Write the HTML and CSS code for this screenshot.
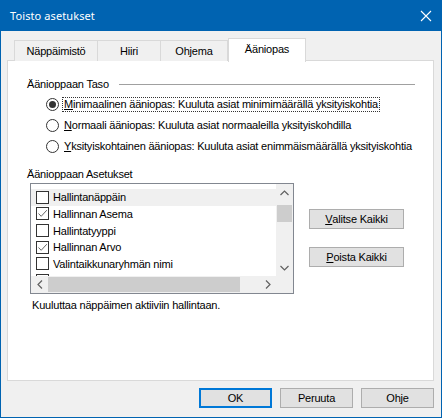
FILE: index.html
```html
<!DOCTYPE html>
<html lang="fi">
<head>
<meta charset="utf-8">
<title>Toisto asetukset</title>
<link rel="stylesheet" href="styles.css">
</head>
<body>
<div class="window">
  <div class="titlebar">
    <span class="title">Toisto asetukset</span>
    <svg class="close" width="12" height="12" viewBox="0 0 12 12"><path d="M1 1L11 11M11 1L1 11" stroke="#ffffff" stroke-width="1.1" fill="none"/></svg>
  </div>
  <div class="client">
    <div class="tabs">
      <div class="tab t1">Näppäimistö</div>
      <div class="tab t2">Hiiri</div>
      <div class="tab t3">Ohjema</div>
      <div class="tab t4 sel">Ääniopas</div>
    </div>
    <div class="panel">
      <div class="group-head"><span class="legend">Äänioppaan Taso</span><div class="rule"></div></div>
      <div class="radios">
        <div class="radio-row"><span class="radio on"></span><span class="rtext focus"><u>M</u>inimaalinen ääniopas: Kuuluta asiat minimimäärällä yksityiskohtia</span></div>
        <div class="radio-row"><span class="radio"></span><span class="rtext"><u>N</u>ormaali ääniopas: Kuuluta asiat normaaleilla yksityiskohdilla</span></div>
        <div class="radio-row"><span class="radio"></span><span class="rtext"><u>Y</u>ksityiskohtainen ääniopas: Kuuluta asiat enimmäismäärällä yksityiskohtia</span></div>
      </div>
      <div class="label2">Äänioppaan Asetukset</div>
      <div class="list-row">
        <div class="listbox">
          <div class="items">
            <div class="item hover"><span class="cb"></span><span>Hallintanäppäin</span></div>
            <div class="item"><span class="cb checked"><svg width="11" height="11" viewBox="0 0 11 11"><path d="M1.5 5.5L4.2 8.3L9.8 2.2" stroke="#666" stroke-width="1" fill="none"/></svg></span><span>Hallinnan Asema</span></div>
            <div class="item"><span class="cb"></span><span>Hallintatyyppi</span></div>
            <div class="item"><span class="cb checked"><svg width="11" height="11" viewBox="0 0 11 11"><path d="M1.5 5.5L4.2 8.3L9.8 2.2" stroke="#666" stroke-width="1" fill="none"/></svg></span><span>Hallinnan Arvo</span></div>
            <div class="item"><span class="cb"></span><span>Valintaikkunaryhmän nimi</span></div>
            <div class="item"><span class="cb"></span></div>
          </div>
          <div class="vscroll">
            <div class="arrow"><svg width="9" height="6" viewBox="0 0 9 6"><path d="M0.5 5L4.5 1L8.5 5" stroke="#606060" stroke-width="1.2" fill="none"/></svg></div>
            <div class="vtrack"><div class="vthumb"></div></div>
            <div class="arrow"><svg width="9" height="6" viewBox="0 0 9 6"><path d="M0.5 1L4.5 5L8.5 1" stroke="#606060" stroke-width="1.2" fill="none"/></svg></div>
          </div>
          <div class="hscroll">
            <div class="arrow"><svg width="6" height="9" viewBox="0 0 6 9"><path d="M5 0.5L1 4.5L5 8.5" stroke="#606060" stroke-width="1.2" fill="none"/></svg></div>
            <div class="htrack"><div class="hthumb"></div></div>
            <div class="arrow"><svg width="6" height="9" viewBox="0 0 6 9"><path d="M1 0.5L5 4.5L1 8.5" stroke="#606060" stroke-width="1.2" fill="none"/></svg></div>
          </div>
          <div class="corner"></div>
        </div>
        <div class="side-buttons">
          <div class="btn"><u>V</u>alitse Kaikki</div>
          <div class="btn"><u>P</u>oista Kaikki</div>
        </div>
      </div>
      <div class="desc">Kuuluttaa näppäimen aktiiviin hallintaan.</div>
    </div>
    <div class="footer">
      <div class="btn fbtn default">OK</div>
      <div class="btn fbtn">Peruuta</div>
      <div class="btn fbtn">Ohje</div>
    </div>
  </div>
</div>
</body>
</html>
```

FILE: styles.css
```css
* { box-sizing: border-box; }
html, body { margin: 0; padding: 0; }
body {
  width: 442px;
  height: 418px;
  background: #f0f0f0;
  font-family: "Liberation Sans", Arial, sans-serif;
  font-size: 11px;
  letter-spacing: -0.2px;
  color: #000;
}
.window {
  width: 442px;
  height: 418px;
  border: 1px solid #0063b1;
  border-top: none;
  background: #f0f0f0;
  display: flex;
  flex-direction: column;
}
.titlebar {
  height: 31px;
  margin: 0 -1px;
  background: #0063b1;
  display: flex;
  align-items: center;
  justify-content: space-between;
  padding: 0 10px 0 10px;
  flex: none;
}
.title {
  font-family: "Noto Sans", "Open Sans", sans-serif;
  font-size: 11px;
  letter-spacing: 0.1px;
  color: #fff;
}
.client {
  flex: 1;
  padding: 7px 7px 0 6px;
  display: flex;
  flex-direction: column;
}
.tabs {
  height: 23px;
  display: flex;
  align-items: flex-end;
  padding-left: 7px;
  position: relative;
  z-index: 2;
  margin-bottom: -1px;
}
.tab {
  height: 21px;
  border: 1px solid #d9d9d9;
  border-bottom: none;
  background: #f0f0f0;
  display: flex;
  align-items: center;
  justify-content: center;
  padding-bottom: 1px;
}
.tab + .tab { border-left: none; }
.t1 { width: 84px; }
.t2 { width: 63px; }
.t3 { width: 67px; }
.t4 { width: 78px; }
.tab.sel {
  height: 24px;
  background: #fff;
  margin-bottom: -1px;
  border-left: 1px solid #d9d9d9;
  padding-bottom: 4px;
}
.panel {
  height: 321px;
  background: #fff;
  border: 1px solid #d9d9d9;
  padding: 17px 18px 0 19px;
  flex: none;
}
.group-head {
  height: 13px;
  display: flex;
  align-items: center;
  line-height: 13px;
}
.rule {
  flex: 1;
  height: 1px;
  background: #a0a0a0;
  margin-left: 10px;
}
.radios {
  margin-top: 3px;
  padding-left: 19px;
}
.radio-row {
  height: 21px;
  display: flex;
  align-items: center;
}
.radio {
  width: 13px;
  height: 13px;
  border: 1px solid #333;
  border-radius: 50%;
  background: #fff;
  flex: none;
  display: flex;
  align-items: center;
  justify-content: center;
  margin-right: 3px;
}
.radio.on::after {
  content: "";
  width: 7px;
  height: 7px;
  border-radius: 50%;
  background: #333;
}
.rtext {
  line-height: 13px;
  padding: 0 1px;
  border: 1px dotted transparent;
  white-space: nowrap;
}
.rtext.focus { border-color: #333; }
.label2 {
  margin-top: 11px;
  line-height: 13px;
}
.list-row {
  margin-top: 2px;
  margin-left: 3px;
  display: flex;
  align-items: flex-start;
}
.listbox {
  width: 264px;
  height: 111px;
  border: 1px solid #828790;
  display: grid;
  grid-template-columns: 1fr 17px;
  grid-template-rows: 1fr 17px;
  flex: none;
}
.items {
  overflow: hidden;
  padding-top: 5px;
}
.item {
  height: 16.67px;
  display: flex;
  align-items: center;
  padding-left: 5px;
  gap: 3px;
  white-space: nowrap;
}
.item.hover { background: #f0f0f0; }
.cb {
  width: 13px;
  height: 13px;
  border: 1px solid #333;
  background: #fff;
  flex: none;
  display: flex;
  align-items: center;
  justify-content: center;
  margin-right: 1px;
}
.vscroll {
  background: #f0f0f0;
  display: flex;
  flex-direction: column;
}
.vscroll .arrow, .hscroll .arrow {
  width: 17px;
  height: 17px;
  display: flex;
  align-items: center;
  justify-content: center;
  flex: none;
}
.vtrack { flex: 1; padding: 4px 1px 0 1px; }
.vthumb { height: 17px; background: #cdcdcd; }
.hscroll {
  background: #f0f0f0;
  display: flex;
}
.htrack { flex: 1; padding: 1px 0; }
.hthumb { width: 192px; height: 15px; background: #cdcdcd; }
.corner { background: #f0f0f0; }
.side-buttons {
  margin-left: 15px;
  margin-top: 26px;
  display: flex;
  flex-direction: column;
  gap: 18px;
}
.btn {
  width: 95px;
  height: 20px;
  background: #e1e1e1;
  border: 1px solid #adadad;
  display: flex;
  align-items: center;
  justify-content: center;
}
.desc {
  margin-top: 5px;
  margin-left: 5px;
  line-height: 13px;
}
.footer {
  margin-top: 7px;
  display: flex;
  justify-content: flex-end;
  gap: 8px;
}
.fbtn { width: 73px; }
.fbtn.default {
  border: 1px solid #0078d7;
  box-shadow: inset 0 0 0 1px #0078d7;
}
```
